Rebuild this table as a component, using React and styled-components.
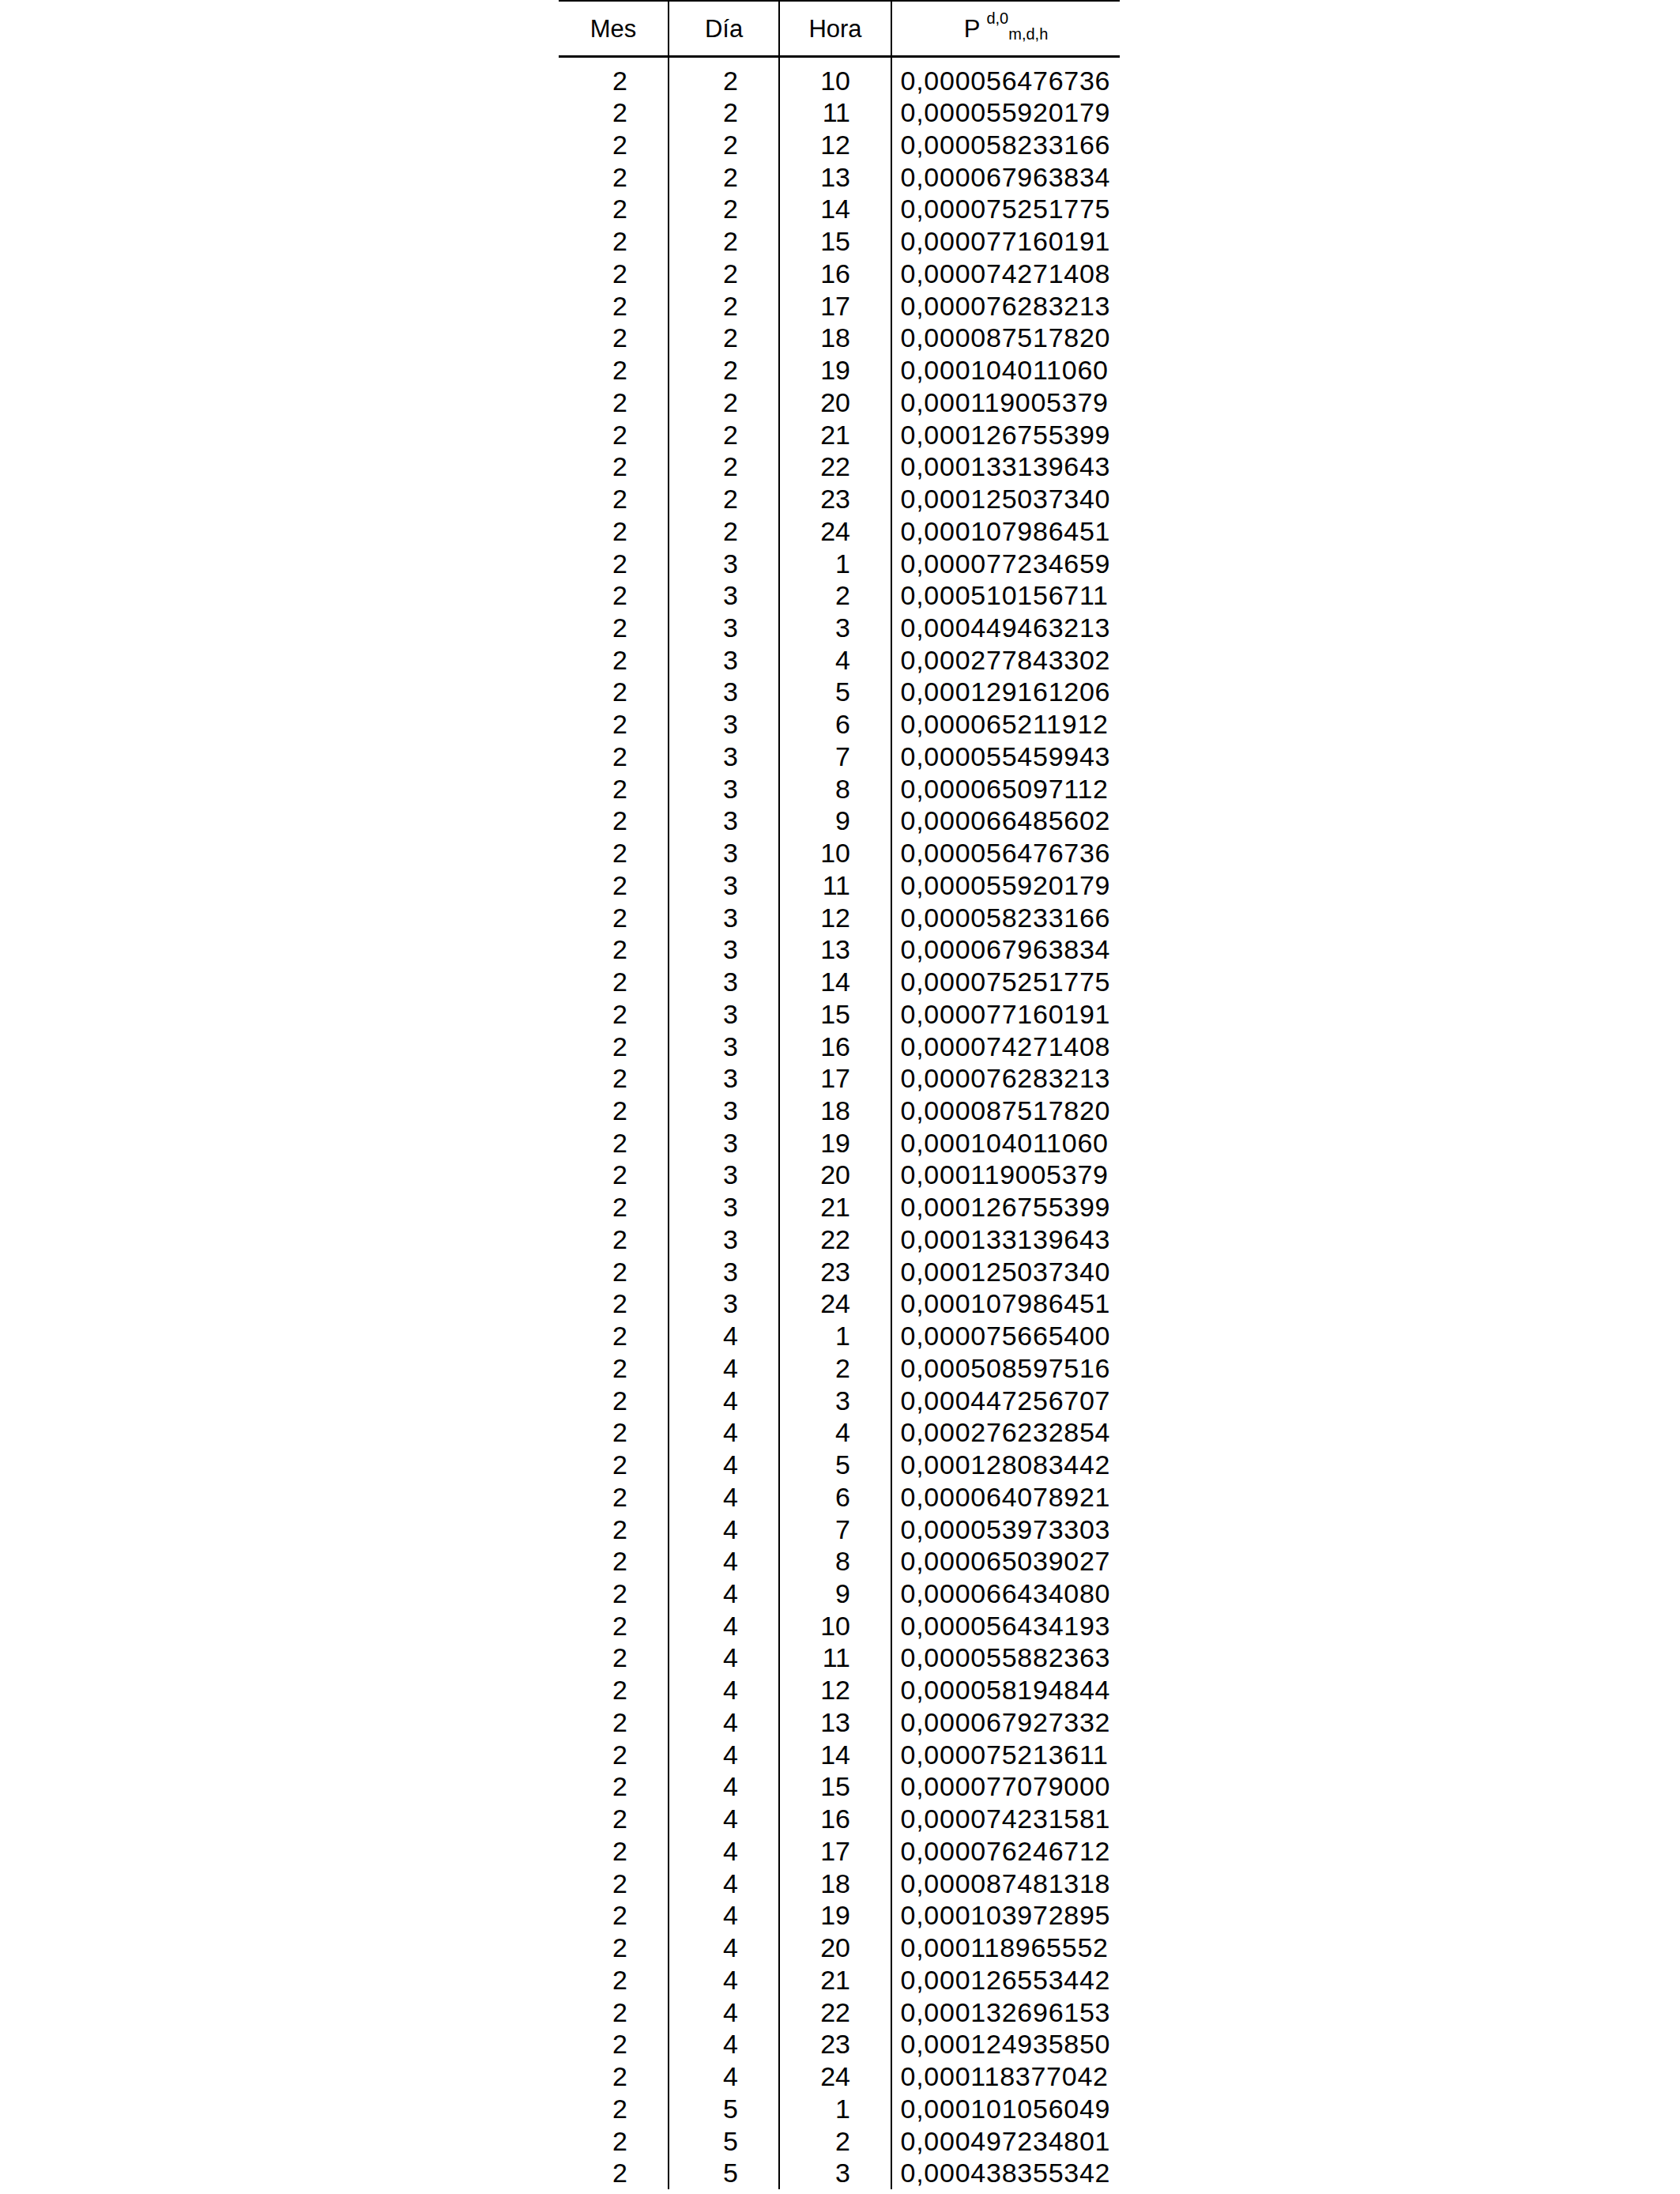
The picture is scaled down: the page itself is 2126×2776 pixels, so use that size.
import React from "react";
import styled, { createGlobalStyle } from "styled-components";

const GlobalStyle = createGlobalStyle`
  html, body {
    margin: 0;
    padding: 0;
    background: #ffffff;
  }
  body {
    font-family: "Liberation Sans", Arial, sans-serif;
    color: #000000;
  }
`;

const Page = styled.div`
  display: flex;
  justify-content: center;
  padding-right: 2px;
`;

const Table = styled.div`
  display: grid;
  grid-template-columns: 140px 140px 142px 288px;
  width: 710px;
  border-top: 2px solid #000;
  box-sizing: border-box;
`;

const HeadCell = styled.div`
  box-sizing: border-box;
  height: 71px;
  padding-top: 1px;
  border-bottom: 3px solid #000;
  border-right: ${(p) => (p.$last ? "none" : "2px solid #000")};
  font-size: 31px;
  line-height: 67px;
  text-align: center;
  white-space: nowrap;
`;

const Sup = styled.span`
  font-size: 20px;
  line-height: 1;
  vertical-align: 17px;
`;

const Sub = styled.span`
  font-size: 20px;
  line-height: 1;
  vertical-align: -3px;
`;

const Cell = styled.div`
  box-sizing: border-box;
  padding-top: ${(p) => (p.$first ? "8.5px" : "0")};
  border-right: ${(p) => (p.$value ? "none" : "2px solid #000")};
  font-size: 34px;
  letter-spacing: ${(p) => (p.$value ? "0.75px" : "0")};
  line-height: 40.73px;
  text-align: ${(p) => (p.$value ? "left" : "right")};
  padding-right: ${(p) => (p.$value ? "0" : "51px")};
  padding-left: ${(p) => (p.$value ? "10.5px" : "0")};
  white-space: nowrap;
`;

const raw = [
  [2, 10, "0,000056476736"],
  [2, 11, "0,000055920179"],
  [2, 12, "0,000058233166"],
  [2, 13, "0,000067963834"],
  [2, 14, "0,000075251775"],
  [2, 15, "0,000077160191"],
  [2, 16, "0,000074271408"],
  [2, 17, "0,000076283213"],
  [2, 18, "0,000087517820"],
  [2, 19, "0,000104011060"],
  [2, 20, "0,000119005379"],
  [2, 21, "0,000126755399"],
  [2, 22, "0,000133139643"],
  [2, 23, "0,000125037340"],
  [2, 24, "0,000107986451"],
  [3, 1, "0,000077234659"],
  [3, 2, "0,000510156711"],
  [3, 3, "0,000449463213"],
  [3, 4, "0,000277843302"],
  [3, 5, "0,000129161206"],
  [3, 6, "0,000065211912"],
  [3, 7, "0,000055459943"],
  [3, 8, "0,000065097112"],
  [3, 9, "0,000066485602"],
  [3, 10, "0,000056476736"],
  [3, 11, "0,000055920179"],
  [3, 12, "0,000058233166"],
  [3, 13, "0,000067963834"],
  [3, 14, "0,000075251775"],
  [3, 15, "0,000077160191"],
  [3, 16, "0,000074271408"],
  [3, 17, "0,000076283213"],
  [3, 18, "0,000087517820"],
  [3, 19, "0,000104011060"],
  [3, 20, "0,000119005379"],
  [3, 21, "0,000126755399"],
  [3, 22, "0,000133139643"],
  [3, 23, "0,000125037340"],
  [3, 24, "0,000107986451"],
  [4, 1, "0,000075665400"],
  [4, 2, "0,000508597516"],
  [4, 3, "0,000447256707"],
  [4, 4, "0,000276232854"],
  [4, 5, "0,000128083442"],
  [4, 6, "0,000064078921"],
  [4, 7, "0,000053973303"],
  [4, 8, "0,000065039027"],
  [4, 9, "0,000066434080"],
  [4, 10, "0,000056434193"],
  [4, 11, "0,000055882363"],
  [4, 12, "0,000058194844"],
  [4, 13, "0,000067927332"],
  [4, 14, "0,000075213611"],
  [4, 15, "0,000077079000"],
  [4, 16, "0,000074231581"],
  [4, 17, "0,000076246712"],
  [4, 18, "0,000087481318"],
  [4, 19, "0,000103972895"],
  [4, 20, "0,000118965552"],
  [4, 21, "0,000126553442"],
  [4, 22, "0,000132696153"],
  [4, 23, "0,000124935850"],
  [4, 24, "0,000118377042"],
  [5, 1, "0,000101056049"],
  [5, 2, "0,000497234801"],
  [5, 3, "0,000438355342"],
];

export default function App() {
  return (
    <>
      <GlobalStyle />
      <Page>
        <Table>
          <HeadCell>Mes</HeadCell>
          <HeadCell>Día</HeadCell>
          <HeadCell>Hora</HeadCell>
          <HeadCell $last>
            P <Sup>d,0</Sup>
            <Sub>m,d,h</Sub>
          </HeadCell>
          {raw.map(([dia, hora, val], i) => (
            <React.Fragment key={i}>
              <Cell $first={i === 0}>2</Cell>
              <Cell $first={i === 0}>{dia}</Cell>
              <Cell $first={i === 0}>{hora}</Cell>
              <Cell $first={i === 0} $value>
                {val}
              </Cell>
            </React.Fragment>
          ))}
        </Table>
      </Page>
    </>
  );
}
